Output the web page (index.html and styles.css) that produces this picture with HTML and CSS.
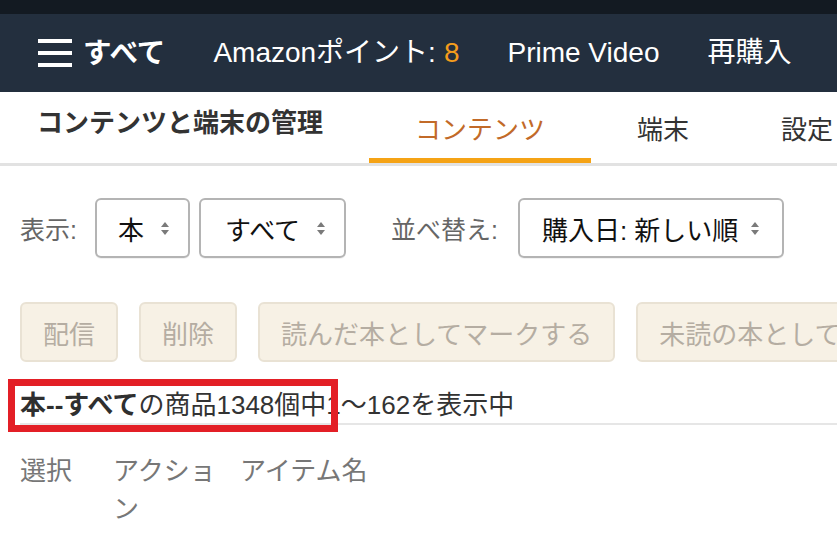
FILE: index.html
```html
<!DOCTYPE html>
<html lang="ja">
<head>
<meta charset="utf-8">
<title>コンテンツと端末の管理</title>
<link rel="stylesheet" href="styles.css">
</head>
<body>
<div class="topstrip"></div>
<header class="nav">
  <a class="nav-item nav-all">
    <span class="burger"><i></i><i></i><i></i></span>
    <span class="all-label">すべて</span>
  </a>
  <a class="nav-item">Amazonポイント: <span class="pts">8</span></a>
  <a class="nav-item">Prime Video</a>
  <a class="nav-item">再購入</a>
</header>
<div class="subnav">
  <h1 class="title">コンテンツと端末の管理</h1>
  <nav class="tabs">
    <a class="tab active">コンテンツ</a>
    <a class="tab">端末</a>
    <a class="tab">設定</a>
  </nav>
</div>
<main class="content">
  <div class="filters">
    <span class="label">表示:</span>
    <div class="select sel-type"><span>本</span><span class="arrows"><b class="up"></b><b class="down"></b></span></div>
    <div class="select sel-all"><span>すべて</span><span class="arrows"><b class="up"></b><b class="down"></b></span></div>
    <span class="label sort-label">並べ替え:</span>
    <div class="select sel-sort"><span>購入日: 新しい順</span><span class="arrows"><b class="up"></b><b class="down"></b></span></div>
  </div>
  <div class="actions">
    <button class="btn" disabled>配信</button>
    <button class="btn" disabled>削除</button>
    <button class="btn" disabled>読んだ本としてマークする</button>
    <button class="btn" disabled>未読の本としてマークする</button>
  </div>
  <div class="summary">
    <span class="summary-text"><strong>本--すべて</strong>の商品1348個中1～162を表示中</span>
    <span class="highlight"></span>
  </div>
  <div class="thead">
    <div class="th">選択</div>
    <div class="th">アクション</div>
    <div class="th">アイテム名</div>
  </div>
</main>
</body>
</html>
```
FILE: styles.css
```css
* { box-sizing: border-box; }
html, body {
  margin: 0;
  padding: 0;
  background: #fff;
  overflow: hidden;
}
body {
  font-family: "Liberation Sans", "Noto Sans CJK JP", sans-serif;
  color: #333;
  width: 837px;
  height: 557px;
}
.topstrip {
  height: 14px;
  background: #131a22;
}
.nav {
  height: 78px;
  background: #232f3e;
  display: flex;
  align-items: center;
  padding-left: 38px;
  gap: 48px;
  white-space: nowrap;
  overflow: hidden;
}
.nav-item {
  color: #fff;
  font-size: 28px;
  line-height: 34px;
  display: flex;
  align-items: center;
}
.nav-all { gap: 11px; }
.all-label { font-weight: bold; font-size: 28.5px; }
.burger {
  display: flex;
  flex-direction: column;
  gap: 8px;
  width: 34px;
}
.burger i {
  display: block;
  height: 4px;
  background: #fff;
}
.pts { color: #f49d1c; margin-left: 8px; }
.subnav {
  height: 74px;
  display: flex;
  align-items: stretch;
  padding-left: 37px;
  border-bottom: 3px solid #e2e2e2;
  white-space: nowrap;
  overflow: hidden;
}
.title {
  margin: 0 46px 0 0;
  font-size: 26px;
  font-weight: bold;
  color: #333;
  line-height: 34px;
  align-self: center;
  padding-bottom: 10px;
}
.tabs { display: flex; }
.tab {
  padding: 0 46px;
  font-size: 26px;
  color: #333;
  display: flex;
  align-items: center;
  border-bottom: 5px solid transparent;
  padding-top: 4px;
}
.tab.active {
  color: #c26a28;
  border-bottom-color: #f5a315;
}
.content {
  padding-left: 20px;
}
.filters {
  margin-top: 32px;
  display: flex;
  align-items: center;
  height: 60px;
  white-space: nowrap;
}
.label {
  font-size: 25px;
  color: #666;
  margin-right: 18px;
}
.sort-label { margin-left: 45px; margin-right: 20px; }
.select {
  height: 60px;
  border: 2px solid #b4b4b4;
  border-radius: 6px;
  display: flex;
  align-items: center;
  padding: 0 18px 0 22px;
  gap: 16px;
  font-size: 26px;
  color: #111;
  box-shadow: 0 1px 0 rgba(0,0,0,0.05);
}
.sel-type { width: 95px; margin-right: 9px; padding-left: 21px; }
.sel-all { width: 147px; padding-left: 24px; gap: 16px; }
.sel-sort { width: 266px; gap: 12px; }
.arrows {
  display: flex;
  flex-direction: column;
  gap: 3px;
  width: 10px;
  align-items: center;
}
.arrows b {
  display: block;
  width: 0;
  height: 0;
  border-left: 4.5px solid transparent;
  border-right: 4.5px solid transparent;
}
.arrows .up { border-bottom: 5px solid #7a7a7a; }
.arrows .down { border-top: 5px solid #7a7a7a; }
.actions {
  margin-top: 44px;
  display: flex;
  gap: 21px;
  white-space: nowrap;
  overflow: hidden;
}
.btn {
  height: 60px;
  flex: none;
  padding: 0 21px;
  background: #f7f1e5;
  border: 2px solid #e9e2d4;
  border-radius: 6px;
  font-family: inherit;
  font-size: 26px;
  color: #b5ada2;
}
.summary {
  position: relative;
  margin-top: 25px;
  border-bottom: 2px solid #e6e6e6;
  font-size: 26px;
  line-height: 36px;
  color: #333;
  white-space: nowrap;
}
.summary strong { color: #2f2f2f; }
.highlight {
  position: absolute;
  left: -12px;
  top: -8px;
  width: 330px;
  height: 53px;
  border: 7px solid #e31f26;
}
.thead {
  display: grid;
  grid-template-columns: 93px 127px auto;
  padding-top: 27px;
}
.th {
  font-size: 26px;
  line-height: 38px;
  color: #777;
  padding-right: 12px;
}
```
